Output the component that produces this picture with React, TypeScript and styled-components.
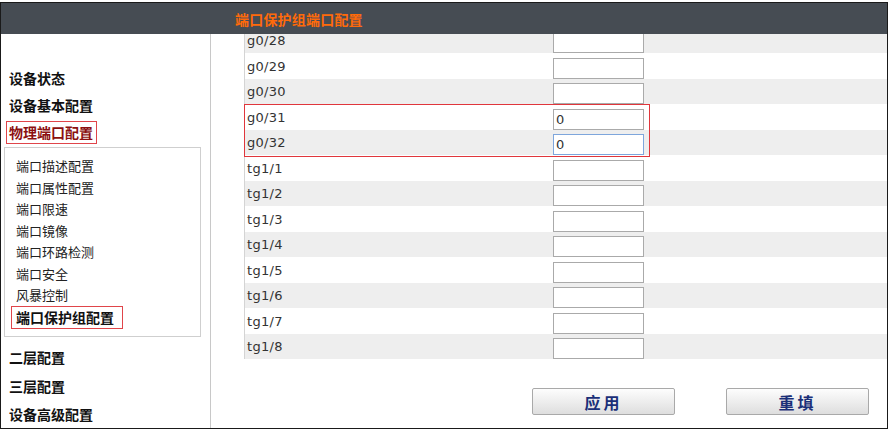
import React from "react";
import styled, { createGlobalStyle } from "styled-components";

const GlobalStyle = createGlobalStyle`
  html, body { margin: 0; padding: 0; background: #fff; }
  body { font-family: "Noto Sans CJK SC", "DejaVu Sans", sans-serif; }
`;

const Frame = styled.div`
  margin-top: 2px;
  width: 886px;
  height: 425px;
  border: 1px solid #1a1a1a;
  display: flex;
  flex-direction: column;
  overflow: hidden;
`;

const Header = styled.div`
  height: 31px;
  flex-shrink: 0;
  background: #464c53;
  display: flex;
  align-items: center;
  padding-left: 234px;
`;

const Title = styled.span`
  color: #ff6a0a;
  font-weight: bold;
  font-size: 14px;
  letter-spacing: 0.2px;
`;

const Body = styled.div`
  flex: 1;
  display: grid;
  grid-template-columns: 210px 1fr;
  min-height: 0;
`;

const Sidebar = styled.div`
  border-right: 1px solid #c8c8c8;
  padding-top: 31px;
  display: flex;
  flex-direction: column;
`;

const Heading = styled.div<{ $active?: boolean; $tall?: boolean }>`
  font-size: 14px;
  font-weight: bold;
  height: ${(p) => (p.$tall ? "28.5px" : "27px")};
  line-height: ${(p) => (p.$tall ? "28.5px" : "27px")};
  padding-left: 8px;
  color: #111;
  ${(p) =>
    p.$active &&
    `
    color: #8b1010;
    align-self: flex-start;
    height: 21px;
    line-height: 21px;
    margin: 2px 0 3px 5px;
    padding: 0 3px 0 2px;
    border: 1px solid #e0454a;
  `}
`;

const SubMenu = styled.div`
  margin: 0 9px 6px 3px;
  border: 1px solid #cfcfcf;
  padding: 7px 0 7px 0;
  display: flex;
  flex-direction: column;
`;

const SubItem = styled.div<{ $active?: boolean }>`
  font-size: 13px;
  height: 21.5px;
  line-height: 21.5px;
  padding-left: 11px;
  color: #222;
  ${(p) =>
    p.$active &&
    `
    align-self: flex-start;
    font-size: 14px;
    font-weight: bold;
    color: #111;
    margin-left: 6px;
    padding: 0 8px 0 4px;
    border: 1px solid #e0454a;
  `}
`;

const Content = styled.div`
  padding-left: 33px;
  display: flex;
  flex-direction: column;
  min-height: 0;
`;

const TableClip = styled.div`
  overflow: hidden;
  flex-shrink: 0;
`;

const Table = styled.div`
  margin-top: -6px;
  border-left: 1px solid #d4d4d4;
`;

const Row = styled.div<{ $alt: boolean }>`
  height: ${(p) => (p.$alt ? "25px" : "26px")};
  display: grid;
  grid-template-columns: 308px 1fr;
  align-items: center;
  background: ${(p) => (p.$alt ? "#eeeeee" : "#ffffff")};
`;

/* the two rows that the red frame marks */
const MarkedGroup = styled.div`
  position: relative;
  &::after {
    content: "";
    position: absolute;
    left: -1px;
    top: 0;
    bottom: -2px;
    width: 406px;
    border: 1px solid rgb(224, 54, 60);
    box-sizing: border-box;
    pointer-events: none;
  }
`;

const Label = styled.span`
  font-family: "DejaVu Sans", Verdana, sans-serif;
  font-size: 13px;
  letter-spacing: 0.3px;
  color: #333;
  padding-left: 2px;
`;

const Field = styled.input<{ $focus?: boolean }>`
  box-sizing: border-box;
  width: 91px;
  height: 21px;
  border: 1px solid ${(p) => (p.$focus ? "#7ea6dc" : "#aaaaaa")};
  background: #fff;
  font-family: "DejaVu Sans", Verdana, sans-serif;
  font-size: 13px;
  color: #333;
  padding: 0 2px;
  outline: none;
`;

const ButtonRow = styled.div`
  display: flex;
  gap: 51px;
  padding: 29px 0 0 288px;
`;

const Button = styled.button`
  width: 143px;
  height: 27px;
  border: 1px solid #a9a9a9;
  border-radius: 2px;
  background: linear-gradient(#fdfdfd, #dedede);
  color: #1a2f78;
  font-family: "Noto Sans CJK SC", sans-serif;
  font-weight: bold;
  font-size: 16px;
  letter-spacing: 3px;
  padding: 0;
`;

const ports = [
  "g0/28", "g0/29", "g0/30", "g0/31", "g0/32",
  "tg1/1", "tg1/2", "tg1/3", "tg1/4", "tg1/5", "tg1/6", "tg1/7", "tg1/8",
];
const values: Record<string, string> = { "g0/31": "0", "g0/32": "0" };
const marked = ["g0/31", "g0/32"];

const subItems = ["端口描述配置", "端口属性配置", "端口限速", "端口镜像", "端口环路检测", "端口安全", "风暴控制"];

const PortRow = ({ port, index }: { port: string; index: number }) => (
  <Row $alt={index % 2 === 0}>
    <Label>{port}</Label>
    <div>
      <Field defaultValue={values[port] ?? ""} $focus={port === "g0/32"} />
    </div>
  </Row>
);

const App = () => {
  const first = ports.indexOf(marked[0]);
  return (
    <>
      <GlobalStyle />
      <Frame>
        <Header>
          <Title>端口保护组端口配置</Title>
        </Header>
        <Body>
          <Sidebar>
            <Heading>设备状态</Heading>
            <Heading>设备基本配置</Heading>
            <Heading $active>物理端口配置</Heading>
            <SubMenu>
              {subItems.map((s) => (
                <SubItem key={s}>{s}</SubItem>
              ))}
              <SubItem $active>端口保护组配置</SubItem>
            </SubMenu>
            <Heading $tall>二层配置</Heading>
            <Heading $tall>三层配置</Heading>
            <Heading $tall>设备高级配置</Heading>
          </Sidebar>
          <Content>
            <TableClip>
              <Table>
                {ports.slice(0, first).map((p, i) => (
                  <PortRow key={p} port={p} index={i} />
                ))}
                <MarkedGroup>
                  {marked.map((p, i) => (
                    <PortRow key={p} port={p} index={first + i} />
                  ))}
                </MarkedGroup>
                {ports.slice(first + marked.length).map((p, i) => (
                  <PortRow key={p} port={p} index={first + marked.length + i} />
                ))}
              </Table>
            </TableClip>
            <ButtonRow>
              <Button>应用</Button>
              <Button>重填</Button>
            </ButtonRow>
          </Content>
        </Body>
      </Frame>
    </>
  );
};

export default App;
